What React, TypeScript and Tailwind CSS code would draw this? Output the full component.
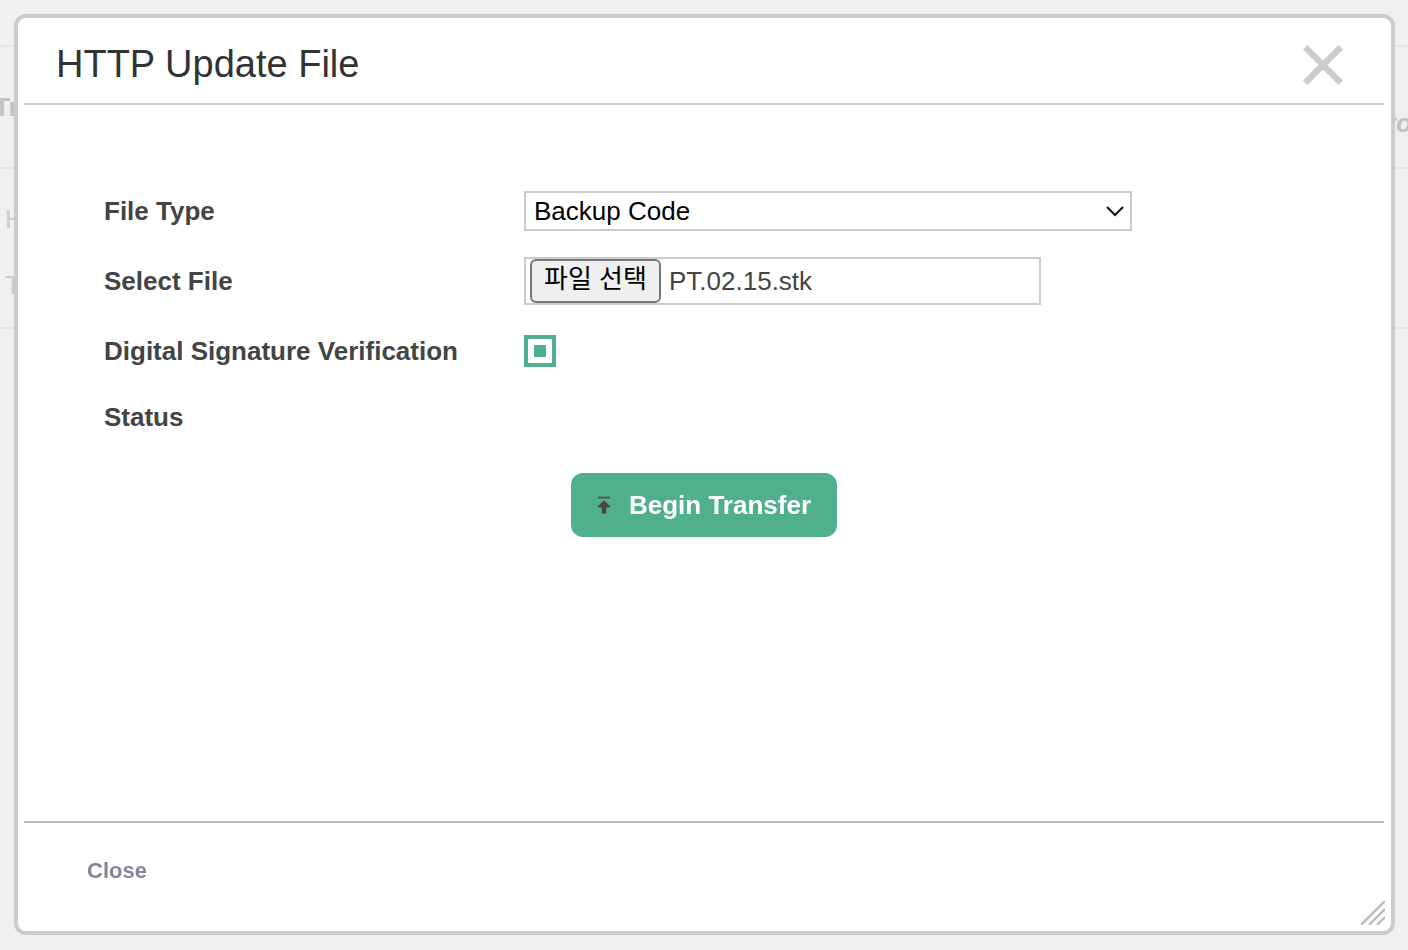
import { useRef, useState } from "react";
import type { ReactNode } from "react";

const FILE_TYPES = ["Backup Code"];

function TransferIcon() {
  return (
    <svg viewBox="0 0 14 18" className="w-[14px] h-[18px]" aria-hidden="true">
      <path d="M1 .5h12v2.2H1z" fill="#46685a" />
      <path d="M7 4.2 13.2 10.2 12.4 11.4H9.2V17.6H4.8V11.4H1.6L.8 10.2z" fill="#454a48" />
    </svg>
  );
}

function ResizeGrip() {
  return (
    <svg
      viewBox="0 0 24 24"
      className="absolute right-1.5 bottom-1.5 size-6 cursor-se-resize"
      stroke="#bbb"
      strokeWidth="2.4"
      aria-hidden="true"
    >
      <path d="M0 24 24 0M8 24 24 8M16 24 24 16" />
    </svg>
  );
}

function FormRow({
  label,
  htmlFor,
  children,
}: {
  label: string;
  htmlFor: string;
  children?: ReactNode;
}) {
  return (
    <div className="flex items-center min-h-12">
      <label htmlFor={htmlFor} className="w-[420px] shrink-0 font-bold">
        {label}
      </label>
      {children}
    </div>
  );
}

function PageBehind() {
  return (
    <div
      className="pt-[45px] text-[26px] leading-8 text-[#cbcbcb] overflow-hidden"
      aria-hidden="true"
    >
      <div className="flex justify-between border-t-2 border-[#e5e5e5] h-[122px] pt-11 font-bold text-[#c2c2c2]">
        <span className="-ml-1.5">Tr</span>
        <span className="italic pt-4 -mr-1">to</span>
      </div>
      <div className="border-y-2 border-[#e5e5e5] h-[162px] pt-[34px] pl-[5px]">
        <p>H</p>
        <p className="pt-[34px]">T</p>
      </div>
    </div>
  );
}

export default function App() {
  const [open, setOpen] = useState(true);
  const [verify, setVerify] = useState(true);
  const [fileName, setFileName] = useState("PT.02.15.stk");
  const fileInput = useRef<HTMLInputElement>(null);

  return (
    <main className="min-h-screen bg-[#f0f0f0] text-[#444] font-['Liberation_Sans','Noto_Sans_CJK_KR',sans-serif]">
      <PageBehind />

      {open && (
        <section
          role="dialog"
          aria-labelledby="dialog-title"
          className="fixed left-[14px] right-[13px] top-[14px] bottom-[15px] flex flex-col pl-1.5 pr-[7px] bg-white border-4 border-[#ccc] rounded-xl"
        >
          <header className="flex items-center justify-between h-[87px] pt-2 pl-8 pr-10 border-b-2 border-[#ccc]">
            <h1 id="dialog-title" className="pb-0.5 text-[38px] leading-10 text-[#333]">
              HTTP Update File
            </h1>
            <button type="button" aria-label="닫기" onClick={() => setOpen(false)}>
              <svg
                viewBox="0 0 42 42"
                className="size-[42px]"
                stroke="#ccc"
                strokeWidth="6.4"
                aria-hidden="true"
              >
                <path d="M3.2 3.2 38.8 38.8M38.8 3.2 3.2 38.8" />
              </svg>
            </button>
          </header>

          <form
            className="flex-1 flex flex-col pt-[82px] px-20 text-[26px] leading-8"
            onSubmit={(e) => e.preventDefault()}
          >
            <div className="flex flex-col gap-[22px]">
              <FormRow label="File Type" htmlFor="file-type">
                <div className="relative w-[608px]">
                  <select
                    id="file-type"
                    className="block appearance-none w-full h-10 pl-2 pr-10 bg-white border-2 border-[#ccc] text-black"
                  >
                    {FILE_TYPES.map((t) => (
                      <option key={t}>{t}</option>
                    ))}
                  </select>
                  <svg
                    viewBox="0 0 18 11"
                    className="absolute right-2 top-[15px] w-[18px] h-[11px] pointer-events-none"
                    fill="none"
                    stroke="#111"
                    strokeWidth="2"
                    aria-hidden="true"
                  >
                    <path d="M1 1 9 9 17 1" />
                  </svg>
                </div>
              </FormRow>

              <FormRow label="Select File" htmlFor="file">
                <div className="flex items-center gap-2 w-[517px] h-12 pl-1 border-2 border-[#ccc]">
                  <input
                    ref={fileInput}
                    id="file"
                    type="file"
                    className="hidden"
                    onChange={(e) =>
                      setFileName(e.target.files?.[0]?.name ?? fileName)
                    }
                  />
                  <button
                    type="button"
                    className="w-[131px] h-11 pb-1 bg-[#efefef] border-2 border-[#767676] rounded-md text-black"
                    onClick={() => fileInput.current?.click()}
                  >
                    파일 선택
                  </button>
                  <span>{fileName}</span>
                </div>
              </FormRow>

              <FormRow label="Digital Signature Verification" htmlFor="verify">
                <input
                  id="verify"
                  type="checkbox"
                  checked={verify}
                  onChange={(e) => setVerify(e.target.checked)}
                  className="appearance-none grid place-items-center size-8 border-4 border-[#50b08c] checked:before:block checked:before:size-3 checked:before:bg-[#50b08c]"
                />
              </FormRow>

              <div className="flex items-center h-10">
                <label htmlFor="status" className="w-[420px] font-bold">
                  Status
                </label>
                <output id="status" />
              </div>
            </div>

            <button
              type="submit"
              className="self-center flex items-center gap-[18px] h-16 mt-9 px-[26px] bg-[#50b08c] rounded-xl font-bold text-white"
            >
              <TransferIcon />
              Begin Transfer
            </button>
          </form>

          <footer className="flex items-center h-[110px] pb-3 pl-[63px] border-t-2 border-[#bbb]">
            <button
              type="button"
              className="text-[22px] leading-7 font-bold text-[#85859a]"
              onClick={() => setOpen(false)}
            >
              Close
            </button>
          </footer>
          <ResizeGrip />
        </section>
      )}
    </main>
  );
}
